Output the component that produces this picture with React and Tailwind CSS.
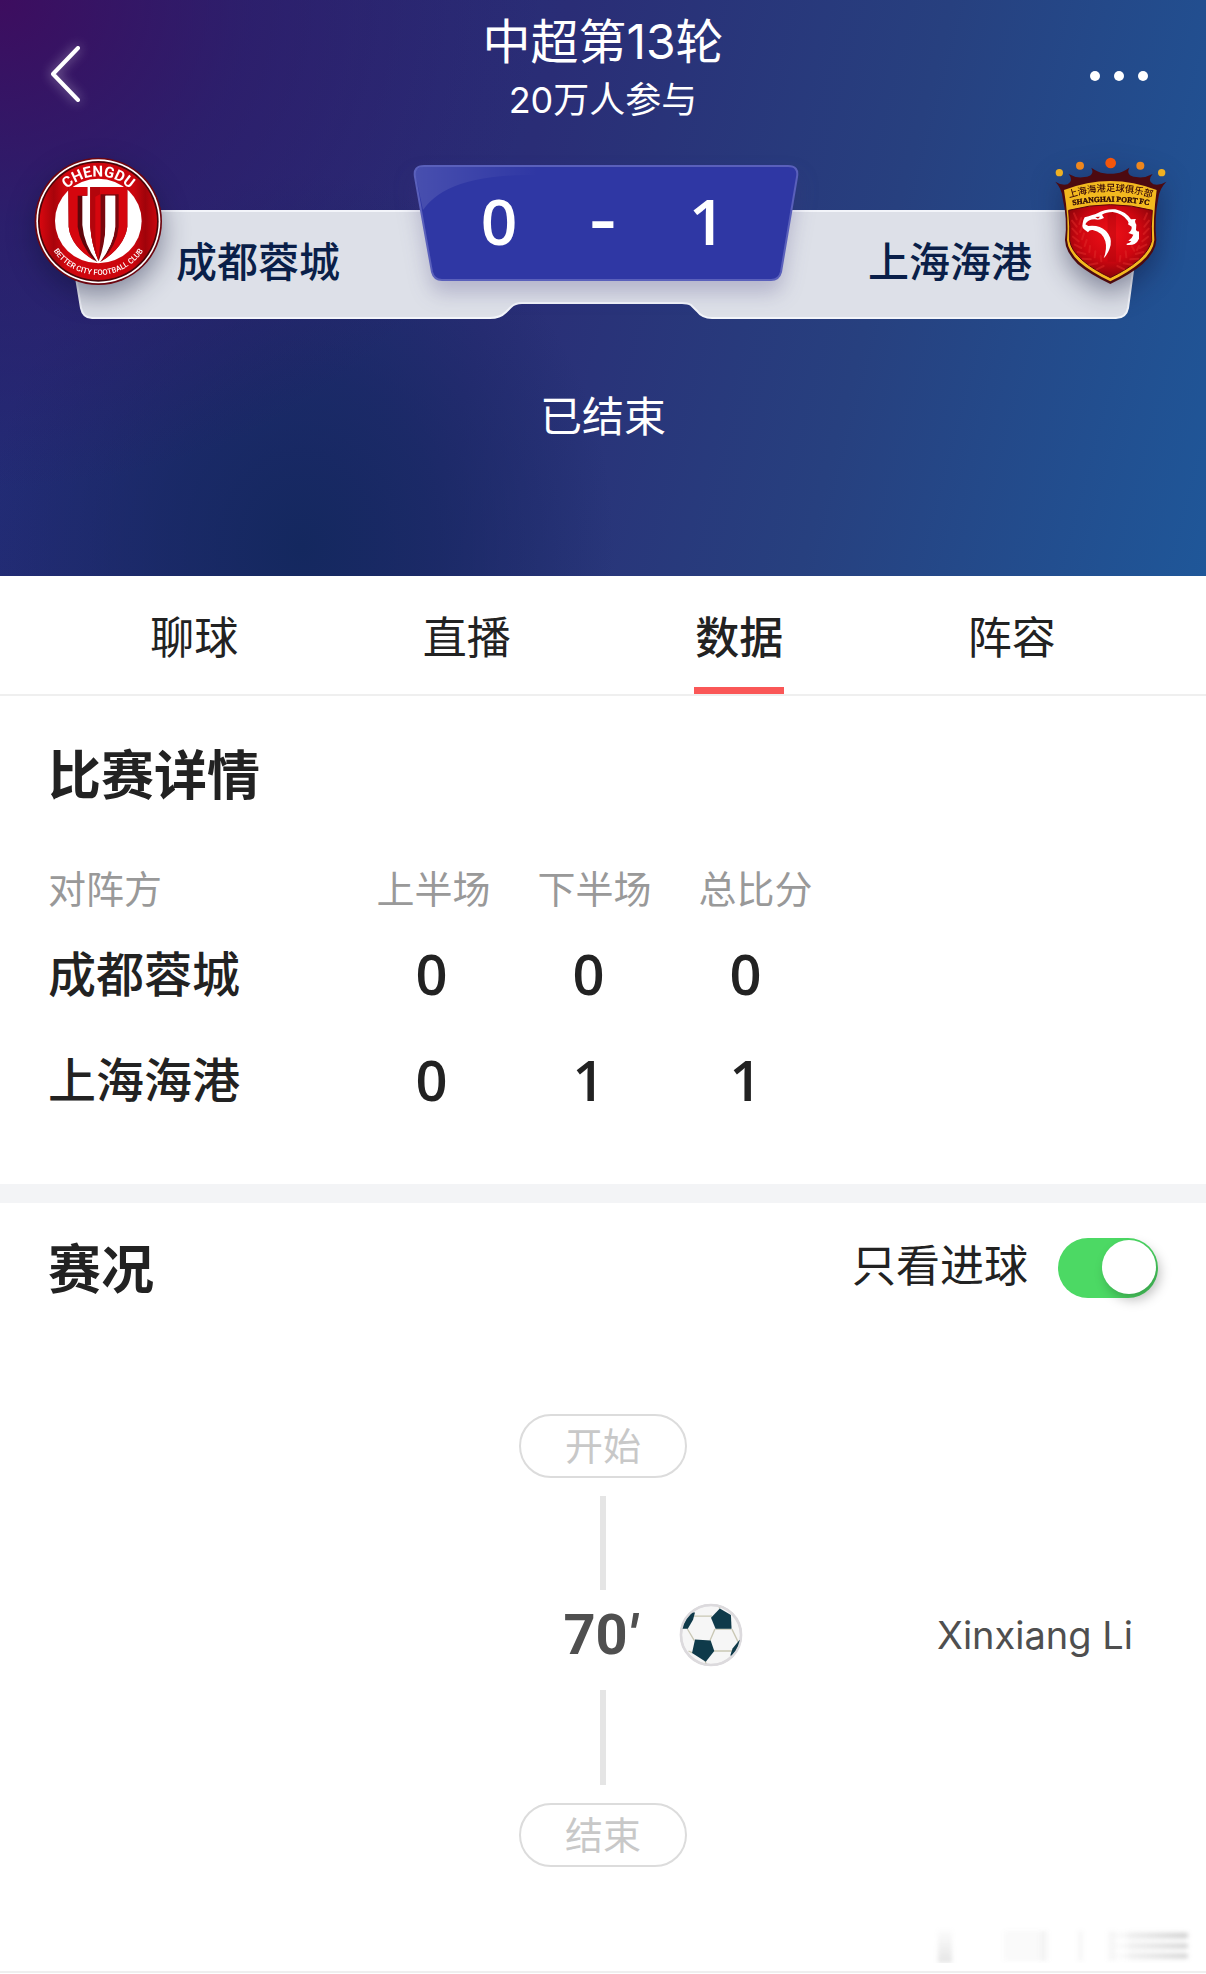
import { useState } from 'react';

const TABS = ['聊球', '直播', '数据', '阵容'];

const PERIODS = ['上半场', '下半场', '总比分'];

const TEAMS = [
  { name: '成都蓉城', scores: [0, 0, 0] },
  { name: '上海海港', scores: [0, 1, 1] },
];

function ChengduCrest() {
  return (
    <svg viewBox="108 81 378 378" className="size-[126px] shrink-0 overflow-visible drop-shadow-[0_10px_14px_rgba(10,15,50,0.45)]" role="img" aria-label="成都蓉城">
      <defs>
        <path id="cd-top" d="M160 274A135 135 0 0 1 430 274" />
        <path id="cd-bottom" d="M134 274A161 161 0 0 0 456 274" />
        <linearGradient id="cd-red" x1="0" x2="1" y1="0" y2="0">
          <stop offset="0" stopColor="#d8070f" />
          <stop offset="0.12" stopColor="#a8040b" />
          <stop offset="0.22" stopColor="#d0060e" />
          <stop offset="0.8" stopColor="#cb050d" />
          <stop offset="0.9" stopColor="#a0030a" />
          <stop offset="1" stopColor="#c8060e" />
        </linearGradient>
      </defs>
      <circle cx="295" cy="274" r="191" fill="#6d0610" />
      <circle cx="295" cy="274" r="186" fill="#fff" />
      <circle cx="295" cy="274" r="181" fill="#4a0508" />
      <circle cx="295" cy="274" r="176" fill="url(#cd-red)" />
      <ellipse cx="295" cy="273" rx="130" ry="127" fill="#fff" />
      <path d="M205 171H262V197H247V285Q252 345 292 396Q212 350 206 290Z" fill="#5e060b" />
      <path d="M205 171H262V197H233V290Q240 345 284 392Q212 350 206 290Z" fill="#d5060e" />
      <path d="M271 171H382V290Q374 350 300 397Q340 345 345 290V197H317V290Q314 345 296 394Q275 345 271 290Z" fill="#7a070d" />
      <path d="M271 171H382V290Q374 350 304 394Q352 345 356 290V193H302V290Q302 345 295 392Q275 345 271 290Z" fill="#d5060e" />
      <path d="M271 171H300V193L286 200V300Q285 350 294 388Q275 345 271 290Z" fill="#b3050c" />
      <path d="M316 197H346V290Q341 345 300 392Q316 345 316 290Z" fill="#fff" />
      <text fill="#fff" fontSize="45" fontWeight="700" textAnchor="middle" className="font-['Roboto',sans-serif]">
        <textPath href="#cd-top" startOffset="50%">CHENGDU</textPath>
      </text>
      <text fill="#fff" fontSize="23" fontWeight="500" textAnchor="middle" className="font-['Roboto',sans-serif]">
        <textPath href="#cd-bottom" startOffset="50%">BETTER CITY FOOTBALL CLUB</textPath>
      </text>
    </svg>
  );
}

function ShanghaiCrest() {
  return (
    <svg viewBox="714 81 378 378" className="size-[126px] shrink-0 overflow-visible drop-shadow-[0_10px_14px_rgba(10,15,50,0.45)]" role="img" aria-label="上海海港">
      <defs>
        <path id="sh-cn" d="M782 206Q913 162 1046 206" />
        <path id="sh-en" d="M784 229Q913 201 1046 229" />
        <radialGradient id="sh-red" cx="0.5" cy="0.4" r="0.65">
          <stop offset="0" stopColor="#ee1018" />
          <stop offset="0.55" stopColor="#cf0610" />
          <stop offset="1" stopColor="#7d0409" />
        </radialGradient>
      </defs>
      <circle cx="760" cy="128" r="11" fill="#efb022" />
      <circle cx="822" cy="107" r="12" fill="#ee871e" />
      <circle cx="914" cy="99" r="16" fill="#f4560c" />
      <circle cx="1003" cy="107" r="12" fill="#ee871e" />
      <circle cx="1067" cy="128" r="11" fill="#efb022" />
      <path
        d="M748 155Q768 168 785 163Q804 152 788 132Q812 146 836 141Q868 137 856 113Q876 127 894 130Q913 133 932 130Q950 127 970 113Q958 137 990 141Q1014 146 1040 132Q1022 152 1042 163Q1060 168 1081 155Q1060 176 1057 205Q1044 268 1051 330Q1050 365 1010 402Q975 432 913 462Q850 432 815 402Q778 365 777 330Q785 268 770 205Q768 176 748 155Z"
        fill="#4d0a10"
      />
      <path d="M774 180Q913 126 1052 180Q1040 270 1045 330Q1042 364 1005 396Q970 426 913 454Q855 426 820 396Q786 364 783 330Q789 270 774 180Z" fill="#f3b91f" />
      <path d="M788 241Q913 207 1039 241Q1034 290 1037 332Q1030 362 998 390Q965 418 913 443Q860 418 828 390Q796 362 791 332Q793 290 788 241Z" fill="url(#sh-red)" stroke="#5d060a" strokeWidth="3" />
      <path d="M905 224Q925 222 930 224V395H905Z" fill="#a5050b" opacity="0.35" />
      {/* laurel leaves */}
      <g fill="none" stroke="#e02a28" strokeWidth="6" strokeLinecap="round" opacity="0.5">
        <path d="M812 268L804 250M812 290L798 272M814 312L799 296M818 334L801 320M826 354L806 344M838 372L815 366M854 388L830 386M874 400L850 404M893 408L872 418" />
        <path d="M820 282L826 264M822 306L830 288M828 328L834 310M836 348L842 330M850 366L852 348M866 382L868 364M886 394L884 378" />
        <path d="M1015 268L1023 250M1015 290L1029 272M1013 312L1028 296M1009 334L1026 320M1001 354L1021 344M989 372L1012 366M973 388L997 386M953 400L977 404M934 408L955 418" />
        <path d="M999 348L993 360M985 362L977 348M961 382L959 364M941 394L943 378" />
      </g>
      {/* eagle head */}
      <path
        d="M836 262Q862 255 874 250Q898 236 928 238Q958 244 975 268L990 267Q984 274 991 284L990 300Q994 306 999 304L999 326Q990 348 962 345L962 341Q972 340 976 334L967 332Q978 326 982 314L967 309Q978 302 977 290L966 283Q970 278 965 272Q948 249 920 246Q900 246 888 254L894 264Q880 272 866 268Q846 268 838 283L847 288Q880 284 900 303Q918 322 914 345Q908 370 893 385Q904 356 898 334Q890 306 860 300Q850 299 846 307L840 302Q826 296 830 280Q832 268 836 262Z"
        fill="#fff"
      />
      <path d="M868 261L882 260L876 266Z" fill="#c00" />
      <text fill="#3a0a0a" fontSize="28" fontWeight="500" textAnchor="middle" className="font-['Noto_Sans_CJK_SC',sans-serif]">
        <textPath href="#sh-cn" startOffset="50%">上海海港足球俱乐部</textPath>
      </text>
      <text fill="#2a0606" fontSize="23" fontWeight="700" textAnchor="middle" stroke="#2a0606" strokeWidth="1" className="font-['Liberation_Serif',serif]">
        <textPath href="#sh-en" startOffset="50%">SHANGHAI PORT FC</textPath>
      </text>
    </svg>
  );
}

function Football() {
  return (
    <svg viewBox="56 67 194 196" className="size-16 shrink-0" role="img" aria-label="进球">
      <defs>
        <clipPath id="ball">
          <circle cx="153" cy="165" r="91" />
        </clipPath>
      </defs>
      <circle cx="153" cy="165" r="92" fill="#f6f6f6" stroke="#dcdadd" strokeWidth="8" />
      <g clipPath="url(#ball)">
        <path d="M98 107H156M165 147L150 182M80 145L102 182M217 147L236 186M167 147H215M162 214H218M97 220L84 214M135 244L139 258M180 84L176 72" fill="none" stroke="#c9c7b4" strokeWidth="4" />
        <path d="M180 84L214 104L216 146H167L153 112Z" fill="#0f3a4a" />
        <path d="M104 179L152 182L163 214L137 247L95 220Z" fill="#0f3a4a" />
        <path d="M104 96L98 118L82 146H60V96Z" fill="#0f3a4a" />
        <path d="M240 180L219 206L212 228L226 230L250 200V180Z" fill="#0f3a4a" />
      </g>
      <circle cx="153" cy="165" r="92" fill="none" stroke="#dcdadd" strokeWidth="6" />
    </svg>
  );
}

function Scoreboard() {
  return (
    <div className="relative mt-[33px] h-[162px] px-9">
      <svg viewBox="0 0 1078 109" preserveAspectRatio="none" className="absolute inset-x-16 bottom-0 h-[109px] w-[calc(100%-128px)]" aria-hidden="true">
        <path
          d="M1 1H1077L1064 98Q1062 108 1052 108H648Q638 108 633 101L627 95Q624 93 618 93H458Q451 93 447 97L442 102Q436 108 426 108H28Q19 108 17 98Z"
          fill="#dde0e8"
          stroke="#f3f5fa"
          strokeWidth="2"
        />
      </svg>
      <div className="relative grid grid-cols-[1fr_390px_1fr] items-start">
        <div className="flex gap-[14px]">
          <ChengduCrest />
          <p className="mt-20 text-[41px] leading-[50px] font-medium text-[#0a1f49]">成都蓉城</p>
        </div>
        <div className="relative mt-2 flex h-[116px] items-start justify-center">
          <svg viewBox="0 0 390 116" className="absolute inset-0 size-full overflow-visible drop-shadow-[0_12px_10px_rgba(60,50,120,0.25)]" aria-hidden="true">
            <defs>
              <linearGradient id="gloss" x1="0" x2="1" y1="0" y2="0">
                <stop offset="0" stopColor="#fff" stopOpacity="0.12" />
                <stop offset="1" stopColor="#fff" stopOpacity="0" />
              </linearGradient>
            </defs>
            <path d="M16 1H380Q391 1 389 12L373 107Q371 115 363 115H34Q26 115 24 107L7 12Q5 1 16 1Z" fill="#2f37a4" stroke="#5a60bb" strokeWidth="2" />
            <path d="M16 2H130V10Q40 8 15 45L8 12Q6 2 16 2Z" fill="url(#gloss)" />
          </svg>
          <p className="relative grid grid-cols-[104px_104px_104px] text-center font-['Open_Sans',sans-serif] text-[64px] leading-[112px] font-semibold text-white">
            <span>0</span>
            <span className="font-['Inter',sans-serif]">-</span>
            <span>1</span>
          </p>
        </div>
        <div className="flex justify-end gap-[12px]">
          <p className="mt-20 text-[41px] leading-[50px] font-medium text-[#0a1f49]">上海海港</p>
          <ShanghaiCrest />
        </div>
      </div>
    </div>
  );
}

function MatchHeader() {
  return (
    <header className="bg-[radial-gradient(ellipse_45%_85%_at_0%_0%,#3d0d5f_0%,rgba(52,20,100,0.55)_45%,transparent_100%),radial-gradient(ellipse_26%_65%_at_25%_95%,#14285f_0%,rgba(20,40,96,0.65)_45%,transparent_100%),linear-gradient(105deg,#202b75_0%,#2a2d76_42%,#27407f_70%,#1f5799_100%)] pb-[131px] text-white">
      <div className="grid grid-cols-[1fr_auto_1fr] items-center px-12 pt-4">
        <button type="button" aria-label="返回" className="justify-self-start pt-2">
          <svg viewBox="0 0 36 60" className="h-[60px] w-9 overflow-visible drop-shadow-[0_0_6px_rgba(255,255,255,0.5)]" fill="none" stroke="currentColor" strokeWidth="4" strokeLinecap="round" strokeLinejoin="round">
            <path d="M30 4L5 30L30 56" />
          </svg>
        </button>
        <div className="text-center">
          <h1 className="text-[48px] leading-[52px]">中超第13轮</h1>
          <p className="mt-2 text-[36px] leading-[48px]">20万人参与</p>
        </div>
        <button type="button" aria-label="更多" className="justify-self-end pt-3">
          <svg viewBox="0 0 76 24" className="h-6 w-[76px]" fill="currentColor">
            <circle cx="13" cy="12" r="5" />
            <circle cx="37" cy="12" r="5" />
            <circle cx="61" cy="12" r="5" />
          </svg>
        </button>
      </div>
      <Scoreboard />
      <p className="mt-[70px] text-center text-[42px] leading-[56px]">已结束</p>
    </header>
  );
}

function TabBar({ active, onChange }) {
  return (
    <nav className="grid grid-cols-4 border-b-2 border-[#efefef] px-[58px]">
      {TABS.map((tab) => (
        <button
          key={tab}
          type="button"
          onClick={() => onChange(tab)}
          className={`flex flex-col items-center pt-8 text-[44px] leading-[60px] ${tab === active ? 'font-medium' : ''}`}
        >
          {tab}
          <span className={`mt-[19px] h-[7px] w-[90px] ${tab === active ? 'bg-[#fa5757]' : ''}`} />
        </button>
      ))}
    </nav>
  );
}

function SectionTitle({ children }) {
  return <h2 className="pt-1 text-[53px] leading-[60px] font-bold">{children}</h2>;
}

function MatchDetail() {
  return (
    <section className="px-12 pt-[46px] pb-[50px]">
      <SectionTitle>比赛详情</SectionTitle>
      <table className="mt-[58px] block">
        <thead className="block">
          <tr className="grid grid-cols-[305px_161px_161px_161px] pb-2 text-[38px] leading-[50px] text-[#999]">
            <th scope="col" className="text-left font-normal">对阵方</th>
            {PERIODS.map((period) => (
              <th key={period} scope="col" className="font-normal">{period}</th>
            ))}
          </tr>
        </thead>
        <tbody className="block">
          {TEAMS.map((team) => (
            <tr key={team.name} className="grid h-[106px] grid-cols-[305px_157px_157px_157px]">
              <th scope="row" className="text-left text-[48px] leading-[106px] font-medium">{team.name}</th>
              {team.scores.map((score, i) => (
                <td key={i} className="text-center font-['Open_Sans',sans-serif] text-[56px] leading-[102px] font-semibold">{score}</td>
              ))}
            </tr>
          ))}
        </tbody>
      </table>
    </section>
  );
}

function Milestone({ children }) {
  return (
    <div className="flex h-16 w-[168px] items-center justify-center rounded-full border-2 border-[#dcdcdc] text-[38px] leading-none text-[#c8c8c8]">
      {children}
    </div>
  );
}

function Watermark() {
  return (
    <svg viewBox="0 0 270 36" className="absolute right-2 bottom-2 h-9 w-[270px]" aria-hidden="true">
      <defs>
        <linearGradient id="fade" x1="0" x2="1" y1="0" y2="0">
          <stop offset="0" stopColor="#999" stopOpacity="0" />
          <stop offset="1" stopColor="#999" stopOpacity="0.45" />
        </linearGradient>
        <linearGradient id="fade-down" x1="0" x2="0" y1="0" y2="1">
          <stop offset="0" stopColor="#aaa" stopOpacity="0.02" />
          <stop offset="1" stopColor="#aaa" stopOpacity="0.3" />
        </linearGradient>
        <filter id="soft">
          <feGaussianBlur stdDeviation="2" />
        </filter>
      </defs>
      <g filter="url(#soft)">
        <rect x="10" y="2" width="14" height="34" fill="url(#fade-down)" />
        <rect x="76" y="4" width="42" height="30" fill="#999" opacity="0.05" />
        <rect x="112" y="4" width="8" height="30" fill="#999" opacity="0.06" />
        <rect x="150" y="4" width="5" height="30" fill="#999" opacity="0.09" />
        <rect x="180" y="4" width="8" height="30" fill="#999" opacity="0.07" />
        <rect x="200" y="4" width="58" height="30" fill="#999" opacity="0.05" />
        <rect x="180" y="6" width="80" height="5" fill="url(#fade)" />
        <rect x="180" y="17" width="80" height="4" fill="url(#fade)" />
        <rect x="180" y="27" width="80" height="4" fill="url(#fade)" />
      </g>
    </svg>
  );
}

function MatchEvents() {
  const [goalsOnly, setGoalsOnly] = useState(true);

  return (
    <section className="relative border-b-2 border-[#efefef] pt-[30px] pb-[104px]">
      <div className="flex h-[70px] items-center justify-between px-12">
        <SectionTitle>赛况</SectionTitle>
        <label className="flex items-start gap-[30px] text-[44px] leading-[56px]">
          只看进球
          <input
            type="checkbox"
            checked={goalsOnly}
            onChange={(e) => setGoalsOnly(e.target.checked)}
            className="h-[60px] w-[100px] appearance-none rounded-full bg-gray-300 p-[2px] before:block before:size-[54px] before:rounded-full before:bg-white before:shadow-[4px_6px_12px_rgba(0,0,0,0.25)] checked:bg-[#4cd964] checked:before:ml-[42px]"
          />
        </label>
      </div>
      <div className="mt-[111px] flex flex-col items-center">
        <Milestone>开始</Milestone>
        <div className="mt-[18px] h-[94px] w-[6px] bg-[#e5e5e5]" />
        <div className="mt-[13px] mb-[23px] grid w-full grid-cols-[1fr_auto_1fr] items-center text-[#4f4f4f]">
          <p className="col-start-2 pr-[6px] font-['Roboto',sans-serif] text-[56px] leading-[64px] font-bold">
            70<span className="italic">′</span>
          </p>
          <div className="flex items-center justify-between pr-[73px] pl-9">
            <Football />
            <p className="text-[38px] leading-[48px]">Xinxiang Li</p>
          </div>
        </div>
        <div className="mb-[18px] h-[95px] w-[6px] bg-[#e5e5e5]" />
        <Milestone>结束</Milestone>
      </div>
      <Watermark />
    </section>
  );
}

function App() {
  const [tab, setTab] = useState('数据');

  return (
    <main className="bg-white font-['Inter','Noto_Sans_CJK_SC',sans-serif] text-[#222]">
      <MatchHeader />
      <TabBar active={tab} onChange={setTab} />
      <MatchDetail />
      <div className="h-[19px] bg-[#f3f4f6]" />
      <MatchEvents />
    </main>
  );
}

export default App;
